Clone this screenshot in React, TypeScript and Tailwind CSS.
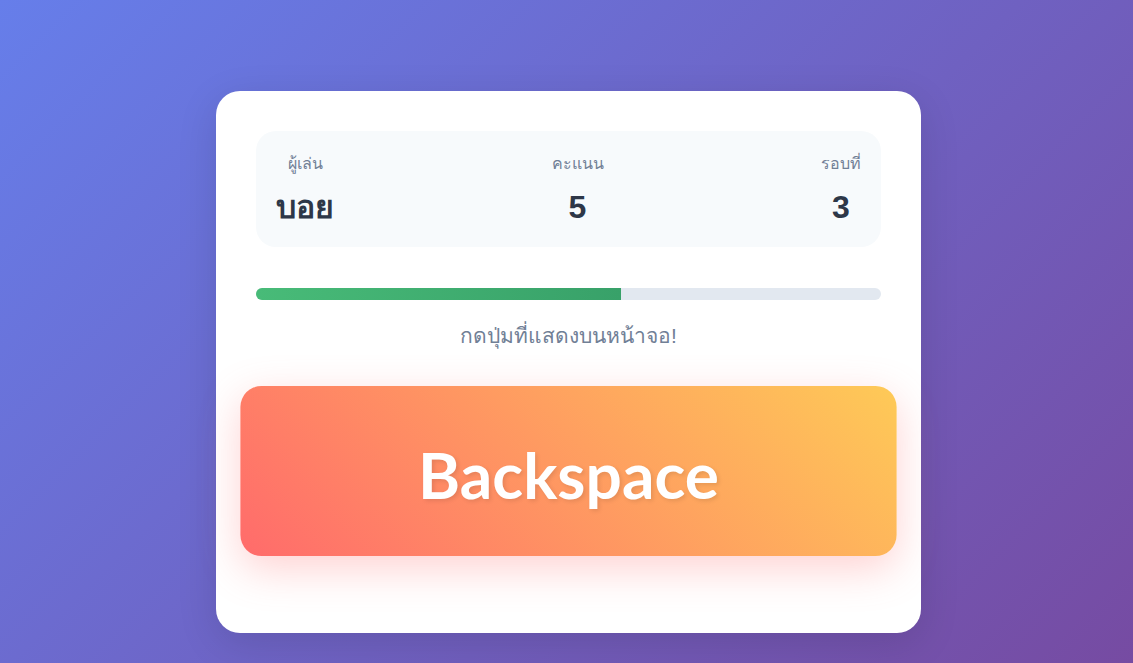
const stats = [
  { label: 'ผู้เล่น', value: 'บอย' },
  { label: 'คะแนน', value: '5' },
  { label: 'รอบที่', value: '3' },
];

const progress = 58.4;

export default function App() {
  return (
    <div
      className="min-h-screen w-full flex justify-center pt-[91px] pl-[4px] bg-[linear-gradient(135deg,#667eea_0%,#764ba2_100%)]"
      style={{ fontFamily: '"Liberation Sans", "Noto Sans", sans-serif' }}
    >
      <div className="w-[705px] h-[542px] bg-white rounded-[24px] px-[40px] pt-[40px] shadow-[0_10px_40px_rgba(0,0,0,0.12)]">
        <section className="h-[116px] bg-[#f7fafc] rounded-[20px] px-[20px] flex justify-between items-center">
          {stats.map((s) => (
            <div key={s.label} className="flex flex-col items-center pt-[2px]">
              <span className="text-[16px] leading-[22px] text-[#718096]">{s.label}</span>
              <span className="text-[32px] leading-[40px] font-bold text-[#2d3748] mt-[12px]">{s.value}</span>
            </div>
          ))}
        </section>
        <div className="mt-[41px] h-[12px] rounded-full bg-[#e2e8f0] overflow-hidden">
          <div
            className="h-full bg-[linear-gradient(90deg,#48bb78,#38a169)]"
            style={{ width: `${progress}%` }}
          />
        </div>
        <p className="mt-[22px] text-center text-[21px] leading-[27px] text-[#718096]">
          กดปุ่มที่แสดงบนหน้าจอ!
        </p>
        <div className="mt-[41px] h-[162px] scale-[1.05] rounded-[20px] flex items-center justify-center bg-[linear-gradient(45deg,#ff6b6b_0%,#feca57_100%)] shadow-[0_12px_40px_rgba(255,107,107,0.3)]">
          <span
            className="text-white text-[61px] font-bold pt-[8px] [text-shadow:2px_2px_4px_rgba(0,0,0,0.1)]"
            style={{ fontFamily: '"Comic Sans MS", Lato, sans-serif' }}
          >
            Backspace
          </span>
        </div>
      </div>
    </div>
  );
}
